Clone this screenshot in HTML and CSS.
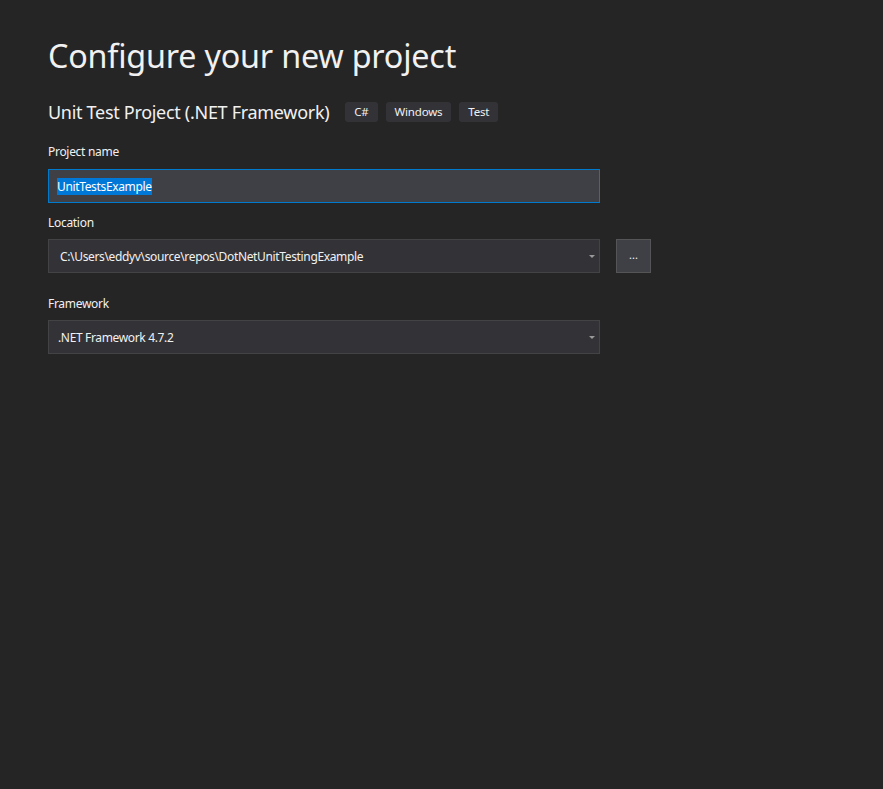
FILE: index.html
```html
<!DOCTYPE html>
<html>
<head>
<meta charset="utf-8">
<link rel="stylesheet" href="styles.css">
</head>
<body>
<main class="page">
  <h1 class="title">Configure your new project</h1>
  <div class="subhead">
    <span class="template">Unit Test Project (.NET Framework)</span>
    <span class="tag">C#</span>
    <span class="tag">Windows</span>
    <span class="tag">Test</span>
  </div>

  <div class="field">
    <label class="label">Project name</label>
    <div class="input focused"><span class="sel">UnitTestsExample</span></div>
  </div>

  <div class="field loc">
    <label class="label">Location</label>
    <div class="row">
      <div class="input combo"><span class="val">C:\Users\eddyv\source\repos\DotNetUnitTestingExample</span><span class="caret"></span></div>
      <div class="browse">...</div>
    </div>
  </div>

  <div class="field fw">
    <label class="label">Framework</label>
    <div class="input combo"><span class="val fwval">.NET Framework 4.7.2</span><span class="caret"></span></div>
  </div>
</main>
</body>
</html>
```
FILE: styles.css
```css
html, body {
  margin: 0;
  padding: 0;
  background: #252526;
  height: 100%;
}
body {
  font-family: "Noto Sans", "Open Sans", sans-serif;
  color: #f1f1f1;
}
.page {
  padding: 35px 0 0 48px;
  display: flex;
  flex-direction: column;
}
.title {
  margin: 0;
  font-weight: 400;
  font-size: 32.3px;
  line-height: 40px;
  letter-spacing: -0.2px;
  color: #f1f1f1;
}
.subhead {
  margin-top: 25px;
  display: flex;
  align-items: center;
  height: 24px;
}
.template {
  font-size: 18px;
  letter-spacing: -0.3px;
  margin-right: 16px;
}
.tag {
  font-size: 11.5px;
  letter-spacing: -0.2px;
  background: #333337;
  border-radius: 3px;
  padding: 0 9px;
  height: 20px;
  line-height: 20px;
  margin-right: 8px;
  color: #f1f1f1;
}
.field {
  margin-top: 19px;
  display: flex;
  flex-direction: column;
}
.field.loc { margin-top: 11px; }
.field.fw { margin-top: 22px; }
.label {
  font-size: 12px;
  letter-spacing: -0.3px;
  line-height: 17px;
  margin-bottom: 9px;
  color: #f1f1f1;
}
.loc .label { margin-bottom: 8px; }
.fw .label { margin-bottom: 8px; }
.row {
  display: flex;
  gap: 16px;
}
.input {
  box-sizing: border-box;
  width: 552px;
  height: 34px;
  background: #333337;
  border: 1px solid #434346;
  display: flex;
  align-items: center;
  font-size: 12px;
  letter-spacing: -0.35px;
  padding-left: 8px;
  position: relative;
}
.input.focused {
  background: #3f3f46;
  border-color: #007acc;
}
.sel {
  background: #0078d7;
  color: #ffffff;
  line-height: 17px;
}
.val {
  padding-left: 3px;
}
.fwval { padding-left: 1px; }
.combo { padding-right: 10px; }
.caret {
  position: absolute;
  right: 4px;
  top: 15px;
  width: 0;
  height: 0;
  border-left: 3px solid transparent;
  border-right: 3px solid transparent;
  border-top: 3px solid #999999;
}
.browse {
  box-sizing: border-box;
  width: 35px;
  height: 34px;
  background: #3f3f46;
  border: 1px solid #555558;
  display: flex;
  align-items: center;
  justify-content: center;
  font-size: 11px;
  padding-bottom: 3px;
}
```
